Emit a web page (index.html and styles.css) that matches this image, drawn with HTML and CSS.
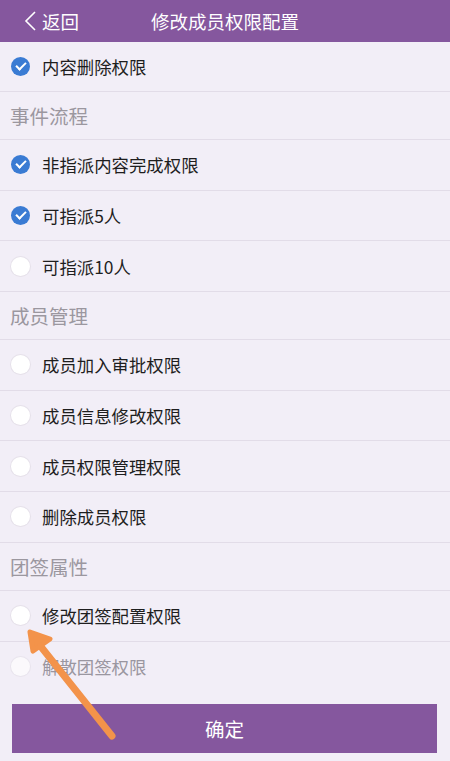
FILE: index.html
```html
<!DOCTYPE html>
<html lang="zh-CN">

<head>
    <meta charset="UTF-8">
    <meta name="viewport" content="width=device-width, initial-scale=1.0">
    <title>修改成员权限配置</title>
    <link rel="stylesheet" href="styles.css">
</head>

<body>
<div class="page">
    <div class="topbar">
        <div class="back">
            <svg class="back-icon" width="14" height="22" viewBox="0 0 14 22">
                <path d="M12 2 L3 11 L12 20" fill="none" stroke="#fff" stroke-width="1.6"/>
            </svg>
            <span>返回</span>
        </div>
        <div class="title">修改成员权限配置</div>
    </div>

    <div class="list">
        <div class="row first"><span class="check on"></span>内容删除权限</div>
        <div class="section">事件流程</div>
        <div class="row"><span class="check on"></span>非指派内容完成权限</div>
        <div class="row"><span class="check on"></span>可指派5人</div>
        <div class="row"><span class="check"></span>可指派10人</div>
        <div class="section">成员管理</div>
        <div class="row"><span class="check"></span>成员加入审批权限</div>
        <div class="row"><span class="check"></span>成员信息修改权限</div>
        <div class="row"><span class="check"></span>成员权限管理权限</div>
        <div class="row"><span class="check"></span>删除成员权限</div>
        <div class="section">团签属性</div>
        <div class="row"><span class="check"></span>修改团签配置权限</div>
        <div class="row last faded"><span class="check"></span>解散团签权限</div>
    </div>

    <div class="footer">
        <button class="btn">确定</button>
    </div>

    <!-- 标注箭头 -->
    <svg class="pointer" width="450" height="761" viewBox="0 0 450 761">
        <line x1="112" y1="736" x2="42" y2="648" stroke="#f3934a" stroke-width="7" stroke-linecap="round"/>
        <polygon points="30,632 50,639 33,651" fill="#f3934a" stroke="#f3934a" stroke-width="5" stroke-linejoin="round"/>
    </svg>
</div>
</body>

</html>
```

FILE: styles.css
```css
body {
    margin: 0;
    font-family: "Noto Sans CJK SC", "Noto Sans", sans-serif;
    background-color: #f2eef7;
}

.page {
    position: relative;
    width: 450px;
    height: 761px;
    overflow: hidden;
    background-color: #f2eef7;
}

.topbar {
    height: 42px;
    background-color: #85579e;
    color: #fff;
    display: flex;
    align-items: center;
    justify-content: center;
    position: relative;
}

.back {
    position: absolute;
    left: 23px;
    top: 0;
    height: 42px;
    display: flex;
    align-items: center;
    gap: 5px;
    font-size: 18.5px;
}

.title {
    font-size: 18.5px;
}

.row {
    height: 50.7px;
    box-sizing: border-box;
    border-bottom: 1px solid #e2dce8;
    display: flex;
    align-items: center;
    padding-left: 11px;
    font-size: 17.4px;
    color: #1e1e1e;
}

.row.first {
    height: 50px;
}

.row.last {
    border-bottom: none;
}

.row.faded {
    color: #9a96a0;
}

.row.faded .check {
    opacity: 0.7;
}

.section {
    height: 48px;
    box-sizing: border-box;
    border-bottom: 1px solid #e2dce8;
    display: flex;
    align-items: center;
    padding-left: 10px;
    font-size: 19.5px;
    color: #9b979f;
}

.check {
    width: 19px;
    height: 19px;
    border-radius: 50%;
    background-color: #fff;
    box-shadow: 0 0 0 1px #e6e1ea;
    margin-right: 12px;
    position: relative;
    flex-shrink: 0;
}

.check.on {
    background-color: #3a7bd3;
    box-shadow: none;
}

.check.on::after {
    content: "";
    position: absolute;
    left: 5px;
    top: 5px;
    width: 8px;
    height: 4px;
    border-left: 2px solid #fff;
    border-bottom: 2px solid #fff;
    transform: rotate(-45deg);
}

.footer {
    padding: 12px 13px 0 12px;
}

.btn {
    width: 100%;
    height: 49px;
    border: none;
    background-color: #85579e;
    color: #fff;
    font-family: inherit;
    font-size: 19.5px;
}

.pointer {
    position: absolute;
    left: 0;
    top: 0;
    pointer-events: none;
}
```
